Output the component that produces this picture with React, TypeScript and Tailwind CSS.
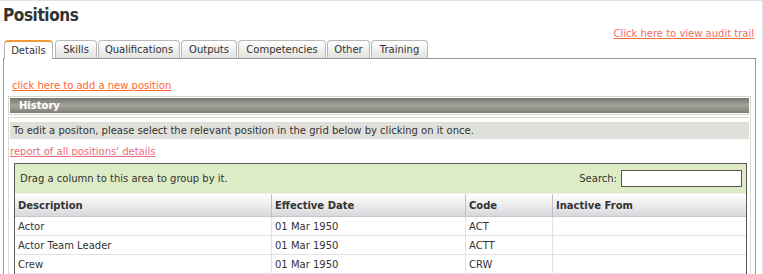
import React from 'react'

const tabs = [
  { label: 'Details', w: 'w-[49px]' },
  { label: 'Skills', w: 'w-[42px]' },
  { label: 'Qualifications', w: 'w-[82px]' },
  { label: 'Outputs', w: 'w-[56px]' },
  { label: 'Competencies', w: 'w-[88px]' },
  { label: 'Other', w: 'w-[43px]' },
  { label: 'Training', w: 'w-[57px]' },
]

const rows = [
  { description: 'Actor', date: '01 Mar 1950', code: 'ACT', inactive: '' },
  { description: 'Actor Team Leader', date: '01 Mar 1950', code: 'ACTT', inactive: '' },
  { description: 'Crew', date: '01 Mar 1950', code: 'CRW', inactive: '' },
]

export default function App() {
  return (
    <div className="w-[763px] h-[274px] overflow-hidden bg-white border-t border-r border-[#e6e0e6] font-['DejaVu_Sans',Verdana,sans-serif] text-[10px] text-[#333]">
      <div className="h-[26px] pl-[3px] pt-[4px]">
        <h1 className="text-[17px] leading-[20px] font-bold tracking-[-0.4px] text-[#333] font-['DejaVu_Sans_Condensed','Liberation_Sans',sans-serif]">Positions</h1>
      </div>

      <div className="flex justify-end pr-[8px] h-[13px] leading-[13px] text-[10px]">
        <a className="text-[#f06e68] underline decoration-[#f0703a]">Click here to view audit trail</a>
      </div>

      <div className="flex items-end gap-px pl-[4px] h-[18px]">
        {tabs.map((t, i) =>
          i === 0 ? (
            <div
              key={t.label}
              className={`${t.w} relative z-10 h-[19px] -mb-px mr-px flex items-center justify-center bg-white border border-b-0 border-[#b4b4b4] border-t-2 border-t-[#f29a3a] rounded-t-[4px]`}
            >
              {t.label}
            </div>
          ) : (
            <div
              key={t.label}
              className={`${t.w} h-[18px] flex items-center justify-center bg-gradient-to-b from-white to-[#e2e2de] border border-b-0 border-[#b8b8b8] rounded-t-[4px]`}
            >
              {t.label}
            </div>
          )
        )}
      </div>

      <div className="ml-[3px] w-[753px] h-[300px] border border-[#8f9b97] px-[4px] pt-[20px]">
        <a className="block ml-[4px] h-[13px] leading-[13px] text-[#ff6633] underline">click here to add a new position</a>

        <div className="mt-[4px] h-[19px] border border-[#d6d6ce] p-px">
          <div className="h-full bg-gradient-to-b from-[#777770] via-[#a4a49c] to-[#7c7c74] pl-[9px] flex items-center font-bold text-white">
            History
          </div>
        </div>

        <div className="mt-[2px] border border-[#dcdcd4] px-px pt-[4px] h-[200px]">
          <div className="h-[17px] bg-[#e0e0da] pl-[3px] flex items-center">
            To edit a positon, please select the relevant position in the grid below by clicking on it once.
          </div>

          <a className="block mt-[6px] h-[13px] leading-[13px] text-[#ea6a80] underline">report of all positions' details</a>

          <div className="mt-[5px] ml-[4px] w-[733px] border border-[#5a5a5a] border-b-0">
            <div className="h-[30px] bg-[#deecc5] flex items-center justify-between pl-[5px] pr-[4px] border-b border-[#eef2e6]">
              <span>Drag a column to this area to group by it.</span>
              <div className="flex items-center gap-[4px]">
                <span>Search:</span>
                <div className="w-[121px] h-[17px] bg-white border border-[#555]" />
              </div>
            </div>

            <div className="grid grid-cols-[256px_194px_87px_1fr] h-[23px] bg-gradient-to-b from-white via-[#ececee] to-[#d8d8dc] border-b border-[#c6c6ca] font-bold">
              {['Description', 'Effective Date', 'Code', 'Inactive From'].map((h, i) => (
                <div key={h} className={`flex items-center pl-[3px] ${i > 0 ? 'border-l border-[#c0c0c4]' : ''}`}>
                  {h}
                </div>
              ))}
            </div>

            {rows.map(r => (
              <div key={r.code} className="grid grid-cols-[256px_194px_87px_1fr] h-[19px] border-b border-[#e2e2e2]">
                <div className="flex items-center pl-[3px]">{r.description}</div>
                <div className="flex items-center pl-[3px] border-l border-[#e2e2e2]">{r.date}</div>
                <div className="flex items-center pl-[3px] border-l border-[#e2e2e2]">{r.code}</div>
                <div className="flex items-center pl-[3px] border-l border-[#e2e2e2]">{r.inactive}</div>
              </div>
            ))}
          </div>
        </div>
      </div>
    </div>
  )
}
